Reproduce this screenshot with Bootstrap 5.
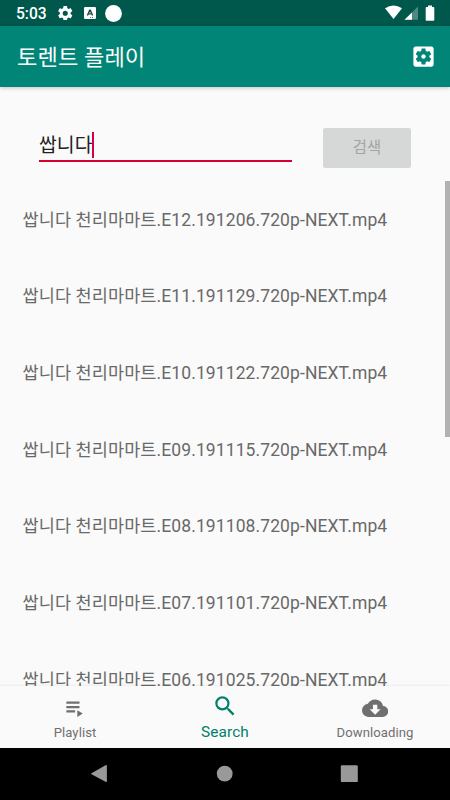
<!DOCTYPE html>
<html lang="ko">
<head>
<meta charset="utf-8">
<meta name="viewport" content="width=device-width, initial-scale=1">
<title>토렌트 플레이</title>
<link href="https://cdn.jsdelivr.net/npm/bootstrap@5.3.0/dist/css/bootstrap.min.css" rel="stylesheet">
<style>
body{font-family:Roboto,"Noto Sans CJK KR",sans-serif;background:#fafafa;height:800px;overflow:hidden}
svg{display:block;fill:currentColor;flex:none}
.status-bar{height:26px;background:#00574b;padding:0 15px 0 16px}
.status-time{font-size:15.6px;font-weight:500;line-height:26px;width:29px;padding-top:2px;white-space:nowrap}
.icon-gear{margin-left:13px}
.icon-lang{margin-left:11px}
.icon-dot{margin-left:9px}
.app-bar{height:61px;background:#008577;padding:0 13px 0 17px;box-shadow:0 1px 4px rgba(0,0,0,.22);z-index:1}
.app-title{font-size:22.1px;line-height:30px;padding-top:1px;letter-spacing:.12px}
.search-row{height:94px;padding:41px 39px 0}
.query-field{width:253px;height:34px;border-bottom:2px solid #d50032}
.query-text{font-size:19.4px;line-height:28px;padding-top:4px;color:#222;width:53px}
.caret{width:2px;height:26px;background:#d50045}
.search-btn,.search-btn:disabled{width:88px;height:40px;border:0;border-radius:2px;background:#d6d7d7;color:#a3a4a4;font-size:15.4px;padding-top:2px!important;opacity:1}
.result-list{height:505px}
.result-item{height:76.67px;padding:1px 0 0 22.5px;font-size:17.5px;color:#696969;letter-spacing:.1px;white-space:nowrap}
.scroll-thumb{width:5px;height:256px;background:#b2b2b2;right:0;top:0}
.tab-bar{height:62px;box-shadow:0 -1px 2px rgba(0,0,0,.06);background:#fafafa;z-index:1}
.tab-item{width:150px;color:#6f6f6f;font-size:13.1px;line-height:16px;padding-top:9px}
.tab-label{padding-top:4px;letter-spacing:.08px}
.tab-item.current{color:#008069;font-size:15.4px;padding-top:7px}
.current .tab-label{padding-top:4.5px}
.system-bar{height:52px;background:#000;color:#999}
</style>
<script src="https://cdn.jsdelivr.net/npm/bootstrap@5.3.0/dist/js/bootstrap.bundle.min.js"></script>
</head>
<body class="d-flex flex-column">
<div class="status-bar d-flex align-items-center text-white">
  <span class="status-time">5:03</span>
  <svg class="icon-gear" width="14.500" height="14.500" viewBox="2 2 20 20"><path d="M19.430 12.980c.04-.32.07-.64.07-.98s-.03-.66-.07-.98l2.110-1.650c.19-.15.24-.42.12-.64l-2-3.460c-.12-.22-.39-.3-.61-.22l-2.490 1c-.52-.4-1.080-.73-1.690-.98l-.38-2.650C14.460 2.180 14.250 2 14 2h-4c-.25 0-.46.18-.49.42l-.38 2.650c-.61.25-1.170.59-1.690.98l-2.490-1c-.23-.09-.49 0-.61.22l-2 3.460c-.13.22-.07.49.12.64l2.110 1.650c-.04.32-.07.65-.07.98s.03.66.07.98l-2.110 1.650c-.19.15-.24.42-.12.64l2 3.460c.12.22.39.3.61.22l2.490-1c.52.4 1.080.73 1.690.98l.38 2.650c.03.24.24.42.49.42h4c.25 0 .46-.18.49-.42l.38-2.650c.61-.25 1.170-.59 1.690-.98l2.490 1c.23.09.49 0 .61-.22l2-3.460c.12-.22.07-.49-.12-.64zM12 15.500a3.500 3.500 0 1 1 0-7 3.500 3.500 0 0 1 0 7z"/></svg>
  <svg class="icon-lang" width="12" height="12" viewBox="0 0 12 12"><rect width="12" height="12" rx="1.200"/><path d="M3.400 8.600 5.700 3.200h.6l2.300 5.400M4.400 6.900h3.200" fill="none" stroke="#164f47" stroke-width="1.400"/><path d="M6 10h1v.8H6zm2 0h1v.8H8z" fill="#00574b"/></svg>
  <svg class="icon-dot" width="17" height="17" viewBox="0 0 17 17"><circle cx="8.500" cy="8.500" r="8.400"/></svg>
  <svg class="ms-auto" width="50" height="16" viewBox="385 5 50 16"><path d="M385 8.200Q393.500 2.800 402 8.200L393.500 19z"/><path d="M418 6.500V19.800H404.500z" opacity=".3"/><path d="M412 12.400V19.800H404.500z"/><path d="M428 5.500h4V7h1.500q.8 0 .8.8V20q0 .8-.8.8h-7q-.8 0-.8-.8V7.800q0-.8.800-.8H428z"/></svg>
</div>
<nav class="app-bar d-flex align-items-center justify-content-between text-white position-relative">
  <span class="app-title">토렌트 플레이</span>
  <svg width="27" height="27" viewBox="0 0 24 24"><path d="M12 10c-1.100 0-2 .9-2 2s.9 2 2 2 2-.9 2-2-.9-2-2-2zm7-7H5c-1.110 0-2 .9-2 2v14c0 1.100.89 2 2 2h14c1.110 0 2-.9 2-2V5c0-1.100-.89-2-2-2zm-1.750 9c0 .23-.02.46-.05.68l1.480 1.160c.13.11.17.3.08.45l-1.400 2.420c-.09.15-.27.21-.43.15l-1.740-.7c-.36.28-.76.51-1.180.69l-.26 1.850c-.03.17-.18.3-.35.3h-2.800c-.17 0-.32-.13-.35-.29l-.26-1.850c-.43-.18-.82-.41-1.180-.69l-1.740.7c-.16.06-.34 0-.43-.15l-1.400-2.420c-.09-.15-.05-.34.08-.45l1.480-1.160c-.03-.23-.05-.46-.05-.69 0-.23.02-.46.05-.68l-1.480-1.160c-.13-.11-.17-.3-.08-.45l1.400-2.420c.09-.15.27-.21.43-.15l1.740.7c.36-.28.76-.51 1.180-.69l.26-1.850c.03-.17.18-.3.35-.3h2.800c.17 0 .32.13.35.29l.26 1.850c.43.18.82.41 1.180.69l1.740-.7c.16-.06.34 0 .43.15l1.400 2.420c.09.15.05.34-.08.45l-1.480 1.160c.03.23.05.46.05.69z"/></svg>
</nav>
<main class="flex-grow-1 overflow-hidden">
  <div class="search-row d-flex justify-content-between">
    <div class="query-field d-flex"><span class="query-text text-nowrap">쌉니다</span><span class="caret mt-1"></span></div>
    <button class="search-btn btn p-0" disabled>검색</button>
  </div>
  <div class="result-list position-relative overflow-hidden">
    <div class="result-item d-flex align-items-center">쌉니다 천리마마트.E12.191206.720p-NEXT.mp4</div>
    <div class="result-item d-flex align-items-center">쌉니다 천리마마트.E11.191129.720p-NEXT.mp4</div>
    <div class="result-item d-flex align-items-center">쌉니다 천리마마트.E10.191122.720p-NEXT.mp4</div>
    <div class="result-item d-flex align-items-center">쌉니다 천리마마트.E09.191115.720p-NEXT.mp4</div>
    <div class="result-item d-flex align-items-center">쌉니다 천리마마트.E08.191108.720p-NEXT.mp4</div>
    <div class="result-item d-flex align-items-center">쌉니다 천리마마트.E07.191101.720p-NEXT.mp4</div>
    <div class="result-item d-flex align-items-center">쌉니다 천리마마트.E06.191025.720p-NEXT.mp4</div>
    <div class="scroll-thumb position-absolute"></div>
  </div>
</main>
<div class="tab-bar d-flex position-relative">
  <div class="tab-item d-flex flex-column align-items-center"><svg width="26.250" height="26.250" viewBox="0 0 24 24"><path d="M4 10h12v2H4zm0-4h12v2H4zm0 8h8v2H4zm10 0v6l5-3z"/></svg><span class="tab-label">Playlist</span></div>
  <div class="tab-item current d-flex flex-column align-items-center"><svg width="26.250" height="26.250" viewBox="0 0 24 24"><path d="M15.500 14h-.79l-.28-.27A6.471 6.471 0 0 0 16 9.500 6.500 6.500 0 1 0 9.500 16c1.610 0 3.090-.59 4.230-1.570l.27.28v.79l5 4.990L20.490 19l-4.990-5zm-6 0a4.500 4.500 0 1 1 0-9 4.500 4.500 0 0 1 0 9z"/></svg><span class="tab-label">Search</span></div>
  <div class="tab-item d-flex flex-column align-items-center"><svg width="26.250" height="26.250" viewBox="0 0 24 24"><path d="M19.350 10.040A7.490 7.490 0 0 0 12 4C9.110 4 6.600 5.640 5.350 8.040A5.994 5.994 0 0 0 0 14c0 3.310 2.690 6 6 6h13c2.760 0 5-2.240 5-5 0-2.640-2.050-4.780-4.650-4.960zM17 13l-5 5-5-5h3V9h4v4h3z"/></svg><span class="tab-label">Downloading</span></div>
</div>
<div class="system-bar">
  <svg width="450" height="52" viewBox="0 748 450 52"><path d="M91.500 773.200 105.500 765.200q1.400-.7 1.400.8v15q0 1.500-1.400.8L91.500 774.200q-.8-.5 0-1z"/><circle cx="224.700" cy="773.700" r="7.900"/><rect x="340.800" y="765.300" width="17" height="16.800" rx="1.200"/></svg>
</div>
</body>
</html>
